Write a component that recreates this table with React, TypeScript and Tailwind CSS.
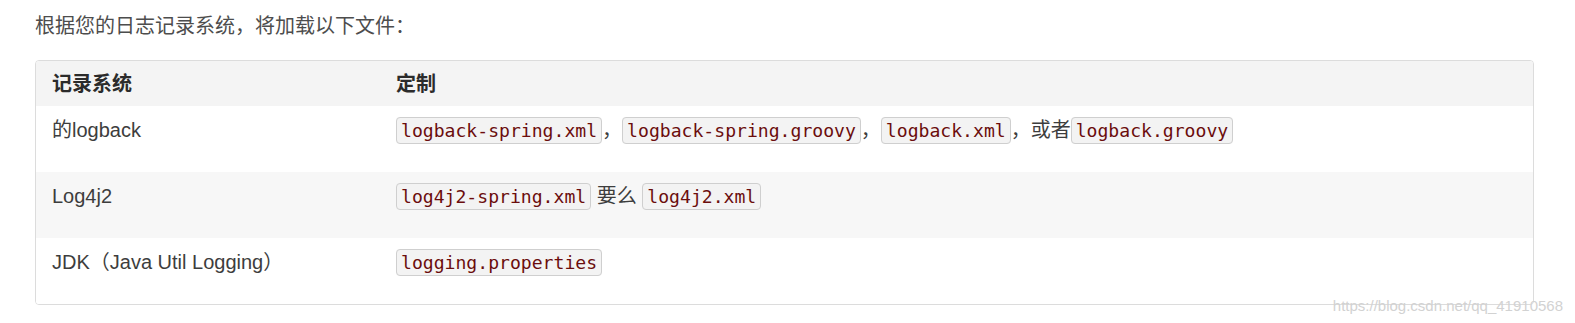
import React from 'react';

const sans = 'font-["Liberation_Sans","Noto_Sans_CJK_SC",sans-serif]';

const Code: React.FC<{ children: React.ReactNode }> = ({ children }) => (
  <code className='font-["DejaVu_Sans_Mono",monospace] text-[18.1px] text-[#6b0d0d] bg-[#f3f3f3] border border-[#cfcfcf] rounded-[4px] px-[4px] py-[2px]'>
    {children}
  </code>
);

interface Row {
  system: string;
  files: React.ReactNode;
  shaded?: boolean;
}

const rows: Row[] = [
  {
    system: '的logback',
    files: (
      <>
        <Code>logback-spring.xml</Code>，<Code>logback-spring.groovy</Code>，<Code>logback.xml</Code>，或者<Code>logback.groovy</Code>
      </>
    ),
  },
  {
    system: 'Log4j2',
    files: (
      <>
        <Code>log4j2-spring.xml</Code> 要么 <Code>log4j2.xml</Code>
      </>
    ),
    shaded: true,
  },
  {
    system: 'JDK（Java Util Logging）',
    files: <Code>logging.properties</Code>,
  },
];

export default function App() {
  return (
    <div className={`relative bg-white w-[1575px] h-[323px] px-[35px] pt-[13px] ${sans}`}>
      <p className="text-[20px] leading-[26px] text-[#4d4d4d] mb-[21px]">
        根据您的日志记录系统，将加载以下文件：
      </p>

      <div className="w-[1499px] border border-[#dcdcdc] rounded-[4px] overflow-hidden text-[20px] leading-[26px] text-[#3d3d3d]">
        <div className="grid grid-cols-[344px_1fr] bg-[#f4f4f4] font-bold text-[#2b2b2b]">
          <div className="px-4 pt-[10px] pb-[9px]">记录系统</div>
          <div className="px-4 pt-[10px] pb-[9px]">定制</div>
        </div>
        {rows.map((r, i) => (
          <div
            key={i}
            className={`grid grid-cols-[344px_1fr] ${r.shaded ? 'bg-[#f7f7f7]' : 'bg-white'}`}
          >
            <div className="px-4 pt-[11px] pb-[28px]">{r.system}</div>
            <div className="px-4 pt-[11px] pb-[28px] whitespace-nowrap">{r.files}</div>
          </div>
        ))}
      </div>

      {/* watermark */}
      <span className='absolute right-[12px] bottom-[9px] font-["Liberation_Sans",sans-serif] text-[15px] leading-[16px] text-[#d2d2d2]'>
        https://blog.csdn.net/qq_41910568
      </span>
    </div>
  );
}
